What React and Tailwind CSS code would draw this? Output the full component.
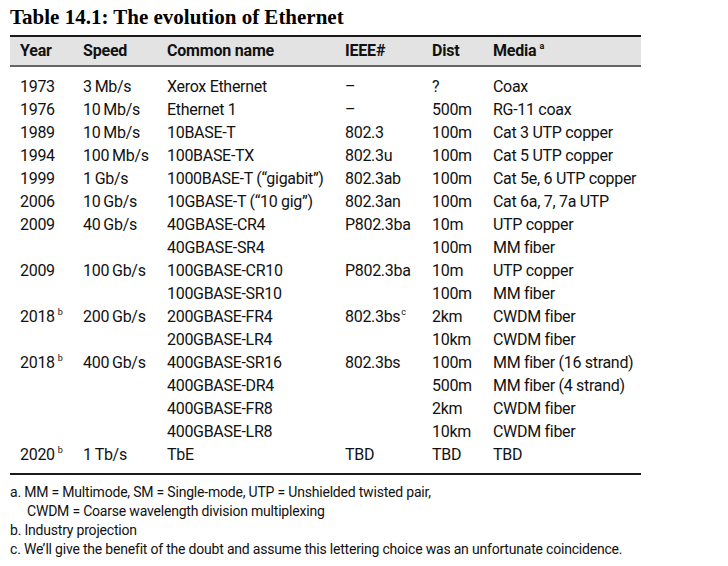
const ROWS = [
  { year: '1973', speed: '3\u2009Mb/s', name: 'Xerox Ethernet', ieee: '–', dist: '?', media: 'Coax' },
  { year: '1976', speed: '10\u2009Mb/s', name: 'Ethernet 1', ieee: '–', dist: '500m', media: 'RG-11 coax' },
  { year: '1989', speed: '10\u2009Mb/s', name: '10BASE-T', ieee: '802.3', dist: '100m', media: 'Cat 3 UTP copper' },
  { year: '1994', speed: '100\u2009Mb/s', name: '100BASE-TX', ieee: '802.3u', dist: '100m', media: 'Cat 5 UTP copper' },
  { year: '1999', speed: '1\u2009Gb/s', name: '1000BASE-T (“gigabit”)', ieee: '802.3ab', dist: '100m', media: 'Cat 5e, 6 UTP copper' },
  { year: '2006', speed: '10\u2009Gb/s', name: '10GBASE-T (“10 gig”)', ieee: '802.3an', dist: '100m', media: 'Cat 6a, 7, 7a UTP' },
  { year: '2009', speed: '40\u2009Gb/s', name: '40GBASE-CR4', ieee: 'P802.3ba', dist: '10m', media: 'UTP copper' },
  { name: '40GBASE-SR4', dist: '100m', media: 'MM fiber' },
  { year: '2009', speed: '100\u2009Gb/s', name: '100GBASE-CR10', ieee: 'P802.3ba', dist: '10m', media: 'UTP copper' },
  { name: '100GBASE-SR10', dist: '100m', media: 'MM fiber' },
  { year: '2018', yearNote: 'b', speed: '200\u2009Gb/s', name: '200GBASE-FR4', ieee: '802.3bs', ieeeNote: 'c', dist: '2km', media: 'CWDM fiber' },
  { name: '200GBASE-LR4', dist: '10km', media: 'CWDM fiber' },
  { year: '2018', yearNote: 'b', speed: '400\u2009Gb/s', name: '400GBASE-SR16', ieee: '802.3bs', dist: '100m', media: 'MM fiber (16 strand)' },
  { name: '400GBASE-DR4', dist: '500m', media: 'MM fiber (4 strand)' },
  { name: '400GBASE-FR8', dist: '2km', media: 'CWDM fiber' },
  { name: '400GBASE-LR8', dist: '10km', media: 'CWDM fiber' },
  { year: '2020', yearNote: 'b', speed: '1\u2009Tb/s', name: 'TbE', ieee: 'TBD', dist: 'TBD', media: 'TBD' },
]

const COLS = 'grid grid-cols-[63px_84px_178px_87px_61px_1fr] px-[10px]'

function Note({ children, tight }) {
  return (
    <sup className={`relative top-[-1px] align-super text-[9px] ${tight ? 'ml-[1px]' : 'ml-[3px]'}`}>
      {children}
    </sup>
  )
}

export default function App() {
  return (
    <div className="min-h-[566px] w-[728px] bg-white text-[#111]" style={{ fontFamily: 'Roboto, sans-serif' }}>
      {/* Title */}
      <div
        className="h-[35px] pl-[10px] pt-[3px] text-[21px] font-bold leading-[28px] text-black"
        style={{ fontFamily: '"Liberation Serif", serif' }}
      >
        Table 14.1: The evolution of Ethernet
      </div>

      <div className="ml-[10px] w-[631px]">
        {/* Header */}
        <div
          className={`${COLS} h-[32px] border-t-2 border-b-2 border-t-[#1a1a1a] border-b-[#666] bg-[#e3e3e3] text-[16px] font-bold leading-[28px] tracking-[-0.2px]`}
        >
          <span>Year</span>
          <span>Speed</span>
          <span>Common name</span>
          <span>IEEE#</span>
          <span>Dist</span>
          <span>
            Media<Note>a</Note>
          </span>
        </div>

        {/* Body */}
        <div className="border-b-2 border-[#1a1a1a] pt-[8px] pb-[7px] text-[16px] leading-[23px] tracking-[-0.3px]">
          {ROWS.map((r, i) => (
            <div key={i} className={`${COLS} h-[23px] whitespace-nowrap`}>
              <span>
                {r.year}
                {r.yearNote && <Note>{r.yearNote}</Note>}
              </span>
              <span>{r.speed}</span>
              <span>{r.name}</span>
              <span>
                {r.ieee}
                {r.ieeeNote && <Note tight>{r.ieeeNote}</Note>}
              </span>
              <span>{r.dist}</span>
              <span>{r.media}</span>
            </div>
          ))}
        </div>

        {/* Footnotes */}
        <div className="pt-[8px] text-[14px] leading-[19px] tracking-[-0.2px]">
          <p>a. MM = Multimode, SM = Single-mode, UTP = Unshielded twisted pair,</p>
          <p className="pl-[17px]">CWDM = Coarse wavelength division multiplexing</p>
          <p>b. Industry projection</p>
          <p>c. We’ll give the benefit of the doubt and assume this lettering choice was an unfortunate coincidence.</p>
        </div>
      </div>
    </div>
  )
}
